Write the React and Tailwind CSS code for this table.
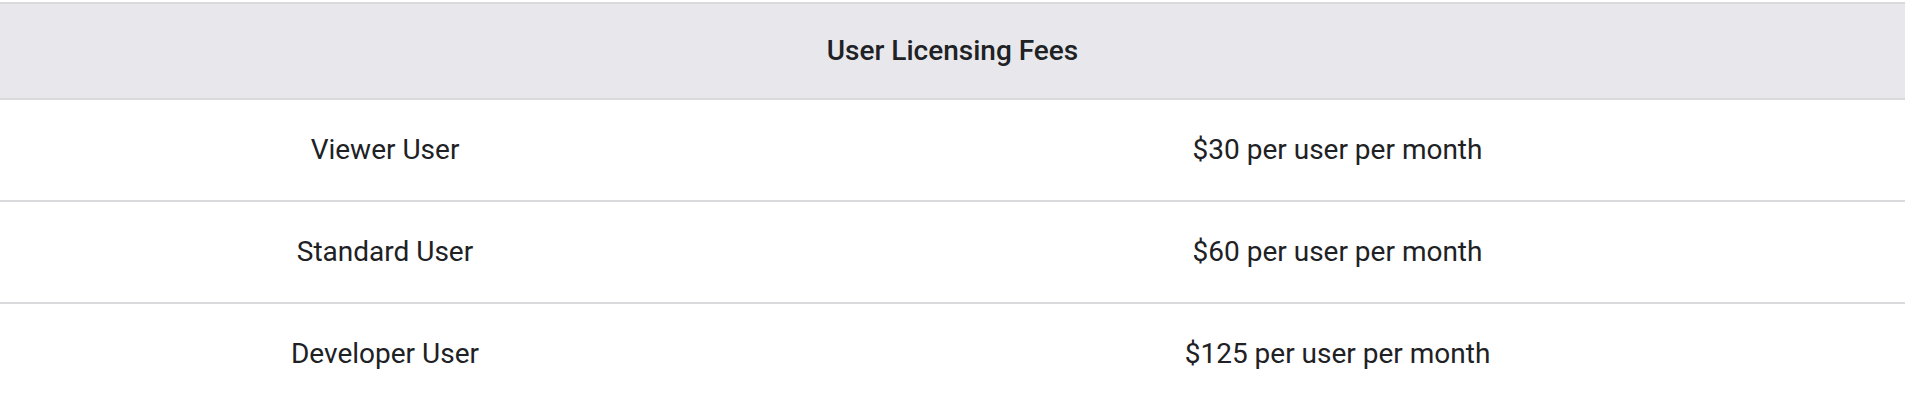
export default function App() {
  const rows = [
    ["Viewer User", "$30 per user per month"],
    ["Standard User", "$60 per user per month"],
    ["Developer User", "$125 per user per month"],
  ];
  return (
    <div className="w-[1905px] pt-[2px] bg-white text-[#202124]" style={{ fontFamily: "Roboto, 'Liberation Sans', sans-serif" }}>
      <div className="border-t-2 border-b-2 border-[#dadadd] bg-[#e8e8ec] h-[98px] flex items-center justify-center">
        <span className="text-[28px] font-medium">User Licensing Fees</span>
      </div>
      {rows.map(([a, b], i) => (
        <div key={i} className="flex h-[102px] border-b-2 border-[#dadadd]">
          <div className="w-[770px] flex items-center justify-center text-[28px]">{a}</div>
          <div className="flex-1 flex items-center justify-center text-[28px]">{b}</div>
        </div>
      ))}
    </div>
  );
}
